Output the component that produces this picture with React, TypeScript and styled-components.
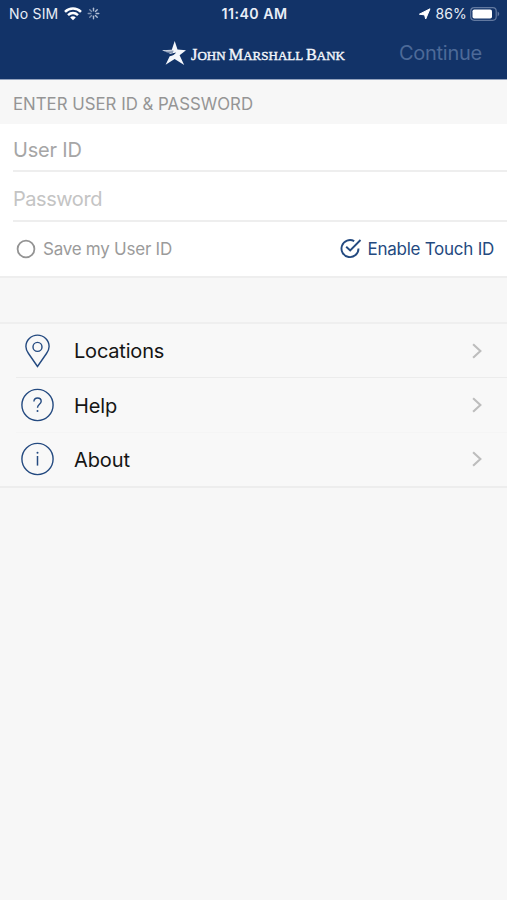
import React from "react";
import styled, { createGlobalStyle } from "styled-components";

const NAVY = "#123368";
const INK = "#244a80";

const GlobalStyle = createGlobalStyle`
  *, *::before, *::after { box-sizing: border-box; }
  body {
    margin: 0;
    background: #f7f7f7;
    font-family: Inter, "Liberation Sans", sans-serif;
  }
  svg { display: block; flex: none; }
`;

const Screen = styled.main`
  min-height: 900px;
  background: #f7f7f7;
`;

const TopBar = styled.header`
  height: 80px;
  background: ${NAVY};
  border-bottom: 1px solid #94a3be;
  color: #fff;
`;

const StatusBar = styled.div`
  display: grid;
  grid-template-columns: 1fr auto 1fr;
  align-items: center;
  height: 27px;
  padding: 1px 7px 0 9px;
  color: #e9eef7;
`;

const StatusGroup = styled.div<{ $end?: boolean }>`
  display: flex;
  align-items: center;
  justify-content: ${(p) => (p.$end ? "flex-end" : "flex-start")};
`;

const Text = styled.span<{
  $size: number;
  $color?: string;
  $weight?: number;
  $spacing?: number;
}>`
  font-size: ${(p) => p.$size}px;
  line-height: 1.2;
  font-weight: ${(p) => p.$weight ?? 400};
  letter-spacing: ${(p) => p.$spacing ?? 0}px;
  color: ${(p) => p.$color ?? "inherit"};
  white-space: nowrap;
`;

const WifiIcon = styled.svg`
  margin-left: 6px;
`;

const SpinnerIcon = styled.svg`
  margin-left: 5px;
`;

const LocationArrow = styled.svg`
  margin-right: 4px;
`;

const BatteryIcon = styled.svg`
  margin-left: 3px;
`;

const NavBar = styled.div`
  display: grid;
  grid-template-columns: 1fr auto 1fr;
  align-items: center;
  height: 52px;
  padding-right: 25px;
`;

const Brand = styled.div`
  grid-column: 2;
  display: flex;
  align-items: center;
  gap: 5px;
  margin-left: 25px;
`;

const Wordmark = styled.span`
  padding-top: 4px;
  font-family: "Liberation Serif", serif;
  font-size: 13px;
  line-height: 20px;
  white-space: nowrap;
  color: #f3f6fb;
  -webkit-text-stroke: 0.4px #f3f6fb;
`;

const Initial = styled.span`
  font-size: 16.2px;
`;

const Continue = styled.button`
  justify-self: end;
  padding: 0;
  border: 0;
  background: none;
  font: inherit;
  color: #4d6a98;
`;

const SectionTitle = styled.h2`
  display: flex;
  align-items: center;
  height: 44px;
  margin: 0;
  padding: 5px 13px 0;
`;

const Form = styled.section`
  background: #fff;
  border-bottom: 2px solid #eeeeee;
  height: 154px;
`;

const Field = styled.div<{ $height: number }>`
  display: flex;
  align-items: center;
  height: ${(p) => p.$height}px;
  margin-left: 13px;
  padding-top: 6px;
  border-bottom: 2px solid #eeeeee;
`;

const Options = styled.div`
  display: flex;
  align-items: center;
  justify-content: space-between;
  height: 55px;
  padding: 0 13px 0 16px;
`;

const Option = styled.label<{ $gap: number }>`
  display: flex;
  align-items: center;
  gap: ${(p) => p.$gap}px;
`;

const Menu = styled.nav`
  margin-top: 44px;
  border-top: 2px solid #efefef;
  border-bottom: 2px solid #ededed;
  background: #f8f8f8;
`;

const MenuRow = styled.div<{ $height: number; $line?: string }>`
  display: flex;
  align-items: center;
  height: ${(p) => p.$height}px;
  padding-right: 24px;
  margin-left: 16px;
  border-bottom: 1px solid ${(p) => p.$line ?? "transparent"};
`;

const IconSlot = styled.span`
  display: flex;
  justify-content: center;
  width: 43px;
  margin-right: 15px;
`;

const Label = styled.span`
  flex: 1;
  padding-top: 1px;
`;

const Star = () => (
  <svg width="24" height="25" viewBox="0 0 24 25" fill="#f4f7fc">
    <path d="M12.7 0 L15.5 8.6 L24 9.2 L17.6 14.3 L22.2 23.9 L12.6 18.1 L3.6 23.8 L7.7 15.2 C10.7 14.8 12.8 13.6 14.2 11.6 L8.3 12.8 L0 9.3 L9.8 8.8 Z" />
    <path d="M2.5 10.2 L11.5 10.1 M5.2 11.6 L11 11.2" stroke={NAVY} strokeWidth=".6" />
  </svg>
);

const Pin = () => (
  <svg width="27" height="34" viewBox="-0.5 0 27 34" fill="none" stroke={INK} strokeWidth="1.4">
    <path d="M13 32.5 L4 19.5 C2.3 17 1.4 14.8 1.4 12.4 A11.6 11.3 0 0 1 24.6 12.4 C24.6 14.8 23.7 17 22 19.5 Z" />
    <circle cx="13" cy="12.9" r="4.5" />
  </svg>
);

const HelpIcon = () => (
  <svg width="35" height="34" viewBox="-0.5 0 35 34" fill="none" stroke={INK} strokeWidth="1.4">
    <circle cx="17" cy="17" r="15.6" />
    <path d="M13.4 13.5 C13.6 11.2 15 10 17 10 C19.2 10 20.7 11.4 20.7 13.3 C20.7 16.3 17 16.3 17 19.7" />
    <circle cx="17" cy="23.1" r="1" fill={INK} stroke="none" />
  </svg>
);

const InfoIcon = () => (
  <svg width="35" height="34" viewBox="-0.5 0 35 34" fill="none" stroke={INK} strokeWidth="1.4">
    <circle cx="17" cy="17" r="15.6" />
    <path d="M17 14 V23.6" strokeWidth="1.5" />
    <circle cx="17" cy="10.8" r="1" fill={INK} stroke="none" />
  </svg>
);

const Chevron = () => (
  <svg width="12" height="16" viewBox="0 0 12 16" fill="none" stroke="#bdbdbd" strokeWidth="2.1">
    <path d="M2.1 1.2 L9.4 8 L2.1 14.8" />
  </svg>
);

const items = [
  { label: "Locations", Icon: Pin, line: "#ececec", height: 54, spacing: -0.2 },
  { label: "Help", Icon: HelpIcon, line: "#f5f5f5", height: 55, spacing: -0.1 },
  { label: "About", Icon: InfoIcon, line: undefined, height: 53, spacing: -0.1 },
];

const spokes = [0, 45, 90, 135, 180, 225, 270, 315];

export default function App() {
  return (
    <Screen>
      <GlobalStyle />
      <TopBar>
        <StatusBar>
          <StatusGroup>
            <Text $size={14} $spacing={0.2}>No SIM</Text>
            <WifiIcon width="18" height="14" viewBox="0 0 18 14" fill="none" stroke="#fff" strokeWidth="2.5">
              <path d="M1 4.8 C5.5 .4 12.5 .4 17 4.8" />
              <path d="M4 8.2 C7 5.4 11 5.4 14 8.2" />
              <path d="M6.2 10.4 C7.8 9 10.2 9 11.8 10.4 L9 13.3 Z" fill="#fff" stroke="none" />
            </WifiIcon>
            <SpinnerIcon width="13" height="13" viewBox="0 0 13 13" strokeWidth="1.4" strokeLinecap="round">
              {spokes.map((angle, i) => (
                <path
                  key={angle}
                  d="M6.5 1.2 V3.8"
                  stroke="#e5ecf7"
                  opacity={i > 4 ? 0.5 : 0.75}
                  transform={`rotate(${angle} 6.5 6.5)`}
                />
              ))}
            </SpinnerIcon>
          </StatusGroup>
          <Text $size={14.2} $weight={600} $spacing={0.45}>11:40 AM</Text>
          <StatusGroup $end>
            <LocationArrow width="13" height="12" viewBox="0 0 13 12" fill="#fff" stroke="#fff" strokeWidth="1" strokeLinejoin="round">
              <path d="M12 .8 L7.7 11 L6.6 6.9 L1.4 6.2 Z" />
            </LocationArrow>
            <Text $size={14} $spacing={0.15}>86%</Text>
            <BatteryIcon width="30" height="14" viewBox="0 0 30 14" fill="none">
              <rect x=".7" y=".7" width="25.5" height="12.6" rx="3.5" stroke="#6279a0" strokeWidth="1.2" />
              <rect x="2.5" y="2.5" width="19.5" height="9" rx="1.8" fill="#fff" />
              <path d="M27.6 4.6 C29.8 5.5 29.8 8.5 27.6 9.4 Z" fill="#6279a0" />
            </BatteryIcon>
          </StatusGroup>
        </StatusBar>
        <NavBar>
          <Brand>
            <Star />
            <Wordmark>
              <Initial>J</Initial>OHN <Initial>M</Initial>ARSHALL <Initial>B</Initial>ANK
            </Wordmark>
          </Brand>
          <Continue>
            <Text $size={20} $spacing={-0.25}>Continue</Text>
          </Continue>
        </NavBar>
      </TopBar>

      <SectionTitle>
        <Text $size={16.8} $spacing={0.01} $color="#959595">ENTER USER ID &amp; PASSWORD</Text>
      </SectionTitle>

      <Form>
        <Field $height={48}>
          <Text $size={20} $spacing={-0.2} $color="#a6a6a6">User ID</Text>
        </Field>
        <Field $height={50}>
          <Text $size={20} $spacing={-0.45} $color="#c4c4c4">Password</Text>
        </Field>
        <Options>
          <Option $gap={7}>
            <svg width="20" height="20" viewBox="0 0 20 20" fill="none" stroke="#949494" strokeWidth="1.8">
              <circle cx="10" cy="10" r="8.4" />
            </svg>
            <Text $size={17} $spacing={-0.25} $color="#9b9b9b">Save my User ID</Text>
          </Option>
          <Option $gap={5}>
            <svg width="22" height="20" viewBox="0 0 22 20" fill="none" stroke={INK} strokeWidth="1.9">
              <path d="M14.2 2.2 A8.5 8.5 0 1 0 18.5 9.5" />
              <path d="M6.2 7.8 L10.2 11.5 L20.5 1" />
            </svg>
            <Text $size={17} $spacing={-0.25} $color={INK}>Enable Touch ID</Text>
          </Option>
        </Options>
      </Form>

      <Menu>
        {items.map(({ label, Icon, line, height, spacing }) => (
          <MenuRow key={label} $line={line} $height={height}>
            <IconSlot>
              <Icon />
            </IconSlot>
            <Label>
              <Text $size={20} $spacing={spacing} $color="#151515">{label}</Text>
            </Label>
            <Chevron />
          </MenuRow>
        ))}
      </Menu>
    </Screen>
  );
}
